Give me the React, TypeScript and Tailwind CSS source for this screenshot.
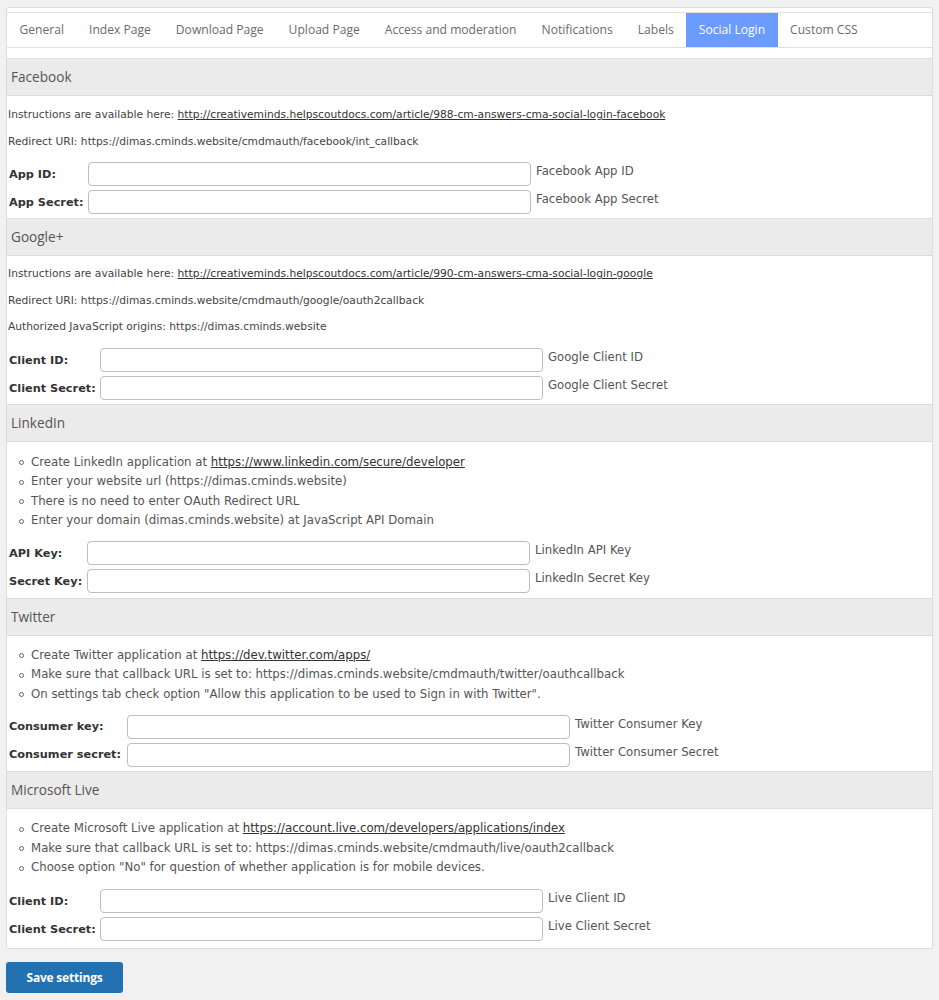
import React from 'react';

const tabs = ['General', 'Index Page', 'Download Page', 'Upload Page', 'Access and moderation', 'Notifications', 'Labels', 'Social Login', 'Custom CSS'];

const body = { fontFamily: '"DejaVu Sans", Verdana, sans-serif' };
const ui = { fontFamily: '"Open Sans", "Segoe UI", sans-serif' };

type Field = { label: string; desc: string };

const Band = ({ title }: { title: string }) => (
  <div className="h-[38px] flex items-center pl-[4px] pt-[1px] bg-[#ebebeb] border-y border-[#dcdcdc] text-[13.6px] text-[#555]" style={ui}>
    {title}
  </div>
);

const Line = ({ children, mt }: { children: React.ReactNode; mt: string }) => (
  <p className={`${mt} pl-[1px] text-[10.7px] leading-[14px] text-[#444]`} style={body}>{children}</p>
);

const Bullets = ({ items, mt }: { items: React.ReactNode[]; mt: string }) => (
  <ul className={mt}>
    {items.map((it, i) => (
      <li key={i} className="flex items-center h-[19.5px] text-[11.75px] text-[#555]" style={body}>
        <span className="ml-[12px] mr-[7px] w-[5px] h-[5px] rounded-full border border-[#666] shrink-0" />
        <span>{it}</span>
      </li>
    ))}
  </ul>
);

const Fields = ({ fields, labelW, top, bottom }: { fields: Field[]; labelW: string; top: string; bottom: string }) => (
  <div className={`${top} ${bottom}`}>
    {fields.map(f => (
      <div key={f.label} className="flex h-[28px] items-center">
        <div className={`${labelW} pl-[2px] pt-[2px] text-[11.3px] font-bold text-[#333] shrink-0`} style={body}>{f.label}</div>
        <input type="text" className="w-[443px] h-[24px] border border-[#bdbdbd] rounded-[4px] bg-white shrink-0 outline-none" />
        <div className="ml-[5px] self-start pt-[4px] text-[11.7px] leading-[14px] text-[#555]" style={body}>{f.desc}</div>
      </div>
    ))}
  </div>
);

const A = ({ children }: { children: React.ReactNode }) => <a href="#" className="underline text-[#333]">{children}</a>;

export default function App() {
  return (
    <div className="min-h-screen bg-[#f1f1f1] pt-[7px] px-[6px] pb-6">
      <div className="w-[927px] bg-white border border-[#dcdcde] rounded-[3px] pt-[4px]">
        <ul className="flex h-[36px] border-y border-[#e0e0e0]" style={ui}>
          {tabs.map(t => (
            <li key={t} className={`px-[12.5px] flex items-center text-[12.1px] ${t === 'Social Login' ? 'bg-[#6a9bfd] text-white' : 'text-[#6b6b6b]'}`}>{t}</li>
          ))}
        </ul>
        <div className="h-[10px]" />

        <Band title="Facebook" />
        <Line mt="mt-[12px]">Instructions are available here: <A>http://creativeminds.helpscoutdocs.com/article/988-cm-answers-cma-social-login-facebook</A></Line>
        <Line mt="mt-[13px]">Redirect URI: https://dimas.cminds.website/cmdmauth/facebook/int_callback</Line>
        <Fields labelW="w-[81px]" top="mt-[11px]" bottom="mb-[2px]" fields={[{ label: 'App ID:', desc: 'Facebook App ID' }, { label: 'App Secret:', desc: 'Facebook App Secret' }]} />

        <Band title="Google+" />
        <Line mt="mt-[11px]">Instructions are available here: <A>http://creativeminds.helpscoutdocs.com/article/990-cm-answers-cma-social-login-google</A></Line>
        <Line mt="mt-[13px]">Redirect URI: https://dimas.cminds.website/cmdmauth/google/oauth2callback</Line>
        <Line mt="mt-[12px]">Authorized JavaScript origins: https://dimas.cminds.website</Line>
        <Fields labelW="w-[93px]" top="mt-[12px]" bottom="mb-[2px]" fields={[{ label: 'Client ID:', desc: 'Google Client ID' }, { label: 'Client Secret:', desc: 'Google Client Secret' }]} />

        <Band title="LinkedIn" />
        <Bullets mt="mt-[11px]" items={[
          <>Create LinkedIn application at <A>https://www.linkedin.com/secure/developer</A></>,
          'Enter your website url (https://dimas.cminds.website)',
          'There is no need to enter OAuth Redirect URL',
          'Enter your domain (dimas.cminds.website) at JavaScript API Domain',
        ]} />
        <Fields labelW="w-[80px]" top="mt-[8px]" bottom="mb-[3px]" fields={[{ label: 'API Key:', desc: 'LinkedIn API Key' }, { label: 'Secret Key:', desc: 'LinkedIn Secret Key' }]} />

        <Band title="Twitter" />
        <Bullets mt="mt-[10px]" items={[
          <>Create Twitter application at <A>https://dev.twitter.com/apps/</A></>,
          'Make sure that callback URL is set to: https://dimas.cminds.website/cmdmauth/twitter/oauthcallback',
          'On settings tab check option "Allow this application to be used to Sign in with Twitter".',
        ]} />
        <Fields labelW="w-[120px]" top="mt-[8px]" bottom="mb-[2px]" fields={[{ label: 'Consumer key:', desc: 'Twitter Consumer Key' }, { label: 'Consumer secret:', desc: 'Twitter Consumer Secret' }]} />

        <Band title="Microsoft Live" />
        <Bullets mt="mt-[11px]" items={[
          <>Create Microsoft Live application at <A>https://account.live.com/developers/applications/index</A></>,
          'Make sure that callback URL is set to: https://dimas.cminds.website/cmdmauth/live/oauth2callback',
          'Choose option "No" for question of whether application is for mobile devices.',
        ]} />
        <Fields labelW="w-[93px]" top="mt-[9px]" bottom="mb-[5px]" fields={[{ label: 'Client ID:', desc: 'Live Client ID' }, { label: 'Client Secret:', desc: 'Live Client Secret' }]} />
      </div>

      <button className="mt-[13px] w-[117px] h-[31px] rounded-[3px] bg-[#2271b1] text-white text-[12px] font-bold tracking-[-0.2px]" style={ui}>Save settings</button>
    </div>
  );
}
